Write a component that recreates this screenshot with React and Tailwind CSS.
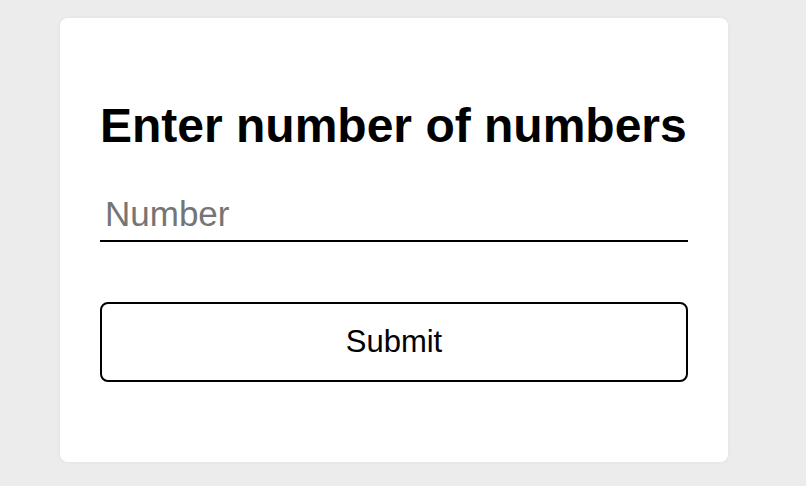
import React from 'react';

const App = () => {
  return (
    <div className="min-h-[486px] w-full bg-[#ececec] pt-[18px] pl-[60px] font-['Liberation_Sans',Arial,sans-serif]">
      <div className="flex w-[668px] flex-col rounded-lg bg-white px-[40px] pt-[80px] pb-[80px] shadow-[0_0_4px_rgba(0,0,0,0.05)]">
        <h1 className="text-[48px] font-bold leading-[56px] text-black">Enter number of numbers</h1>
        <input
          type="text"
          placeholder="Number"
          className="mt-[36px] w-full border-b-2 border-black bg-transparent px-[5px] pt-[4px] pb-[6px] text-[35px] leading-[40px] text-black outline-none placeholder:text-[#757575]"
        />
        <button className="mt-[60px] h-[80px] w-full rounded-lg border-2 border-black bg-white text-[31px] text-black">
          Submit
        </button>
      </div>
    </div>
  );
};

export default App;
